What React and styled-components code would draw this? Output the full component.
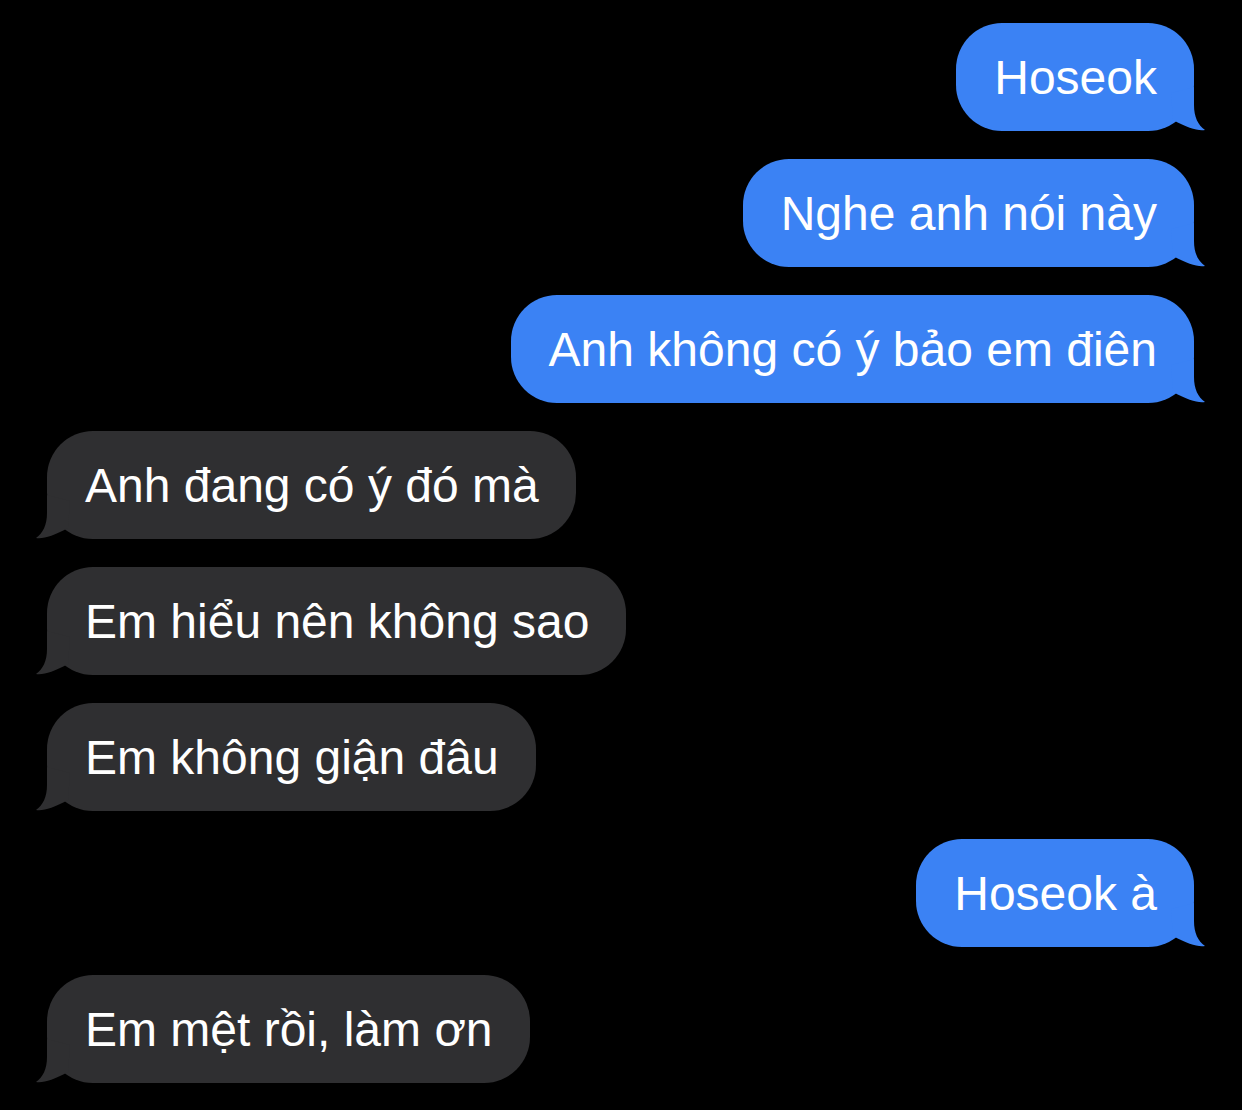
import styled, { createGlobalStyle } from "styled-components";

const messages = [
  { id: 1, fromMe: true, text: "Hoseok" },
  { id: 2, fromMe: true, text: "Nghe anh nói này" },
  { id: 3, fromMe: true, text: "Anh không có ý bảo em điên" },
  { id: 4, fromMe: false, text: "Anh đang có ý đó mà" },
  { id: 5, fromMe: false, text: "Em hiểu nên không sao" },
  { id: 6, fromMe: false, text: "Em không giận đâu" },
  { id: 7, fromMe: true, text: "Hoseok à" },
  { id: 8, fromMe: false, text: "Em mệt rồi, làm ơn" },
];

const BLUE = "#3b82f4";
const GRAY = "#2f2f31";

const Tail = function ({ fromMe }) {
  return (
    <TailSvg $fromMe={fromMe} viewBox="0 0 44 44" width="44" height="44">
      <path
        d="M10 6 L33 0 L33 18 C33 30 37 38 44 43 C36 44 27 41 12 33 Z"
        fill={fromMe ? BLUE : GRAY}
      />
    </TailSvg>
  );
};

export default function App() {
  return (
    <>
      <GlobalStyle />
      <Thread>
        {messages.map((m) => (
          <Row key={m.id} $fromMe={m.fromMe}>
            <Bubble $fromMe={m.fromMe}>
              {m.text}
              <Tail fromMe={m.fromMe} />
            </Bubble>
          </Row>
        ))}
      </Thread>
    </>
  );
}

// Design
const GlobalStyle = createGlobalStyle`
  html, body {
    margin: 0;
    background: #000;
  }
`;

const Thread = styled.div`
  display: flex;
  flex-direction: column;
  gap: 28px;
  padding: 23px 48px 27px 47px;
  background: #000;
  min-height: 1110px;
  box-sizing: border-box;
`;

const Row = styled.div`
  display: flex;
  justify-content: ${(p) => (p.$fromMe ? "flex-end" : "flex-start")};
`;

const Bubble = styled.div`
  position: relative;
  height: 108px;
  box-sizing: border-box;
  padding: 0 37px 0 38px;
  display: flex;
  align-items: center;
  border-radius: 46px;
  background: ${(p) => (p.$fromMe ? BLUE : GRAY)};
  color: #fff;
  font-family: "Liberation Sans", Arial, sans-serif;
  font-size: 48px;
  white-space: nowrap;
`;

const TailSvg = styled.svg`
  position: absolute;
  bottom: 0;
  ${(p) => (p.$fromMe ? "right: -11px;" : "left: -11px; transform: scaleX(-1);")}
  display: block;
`;
